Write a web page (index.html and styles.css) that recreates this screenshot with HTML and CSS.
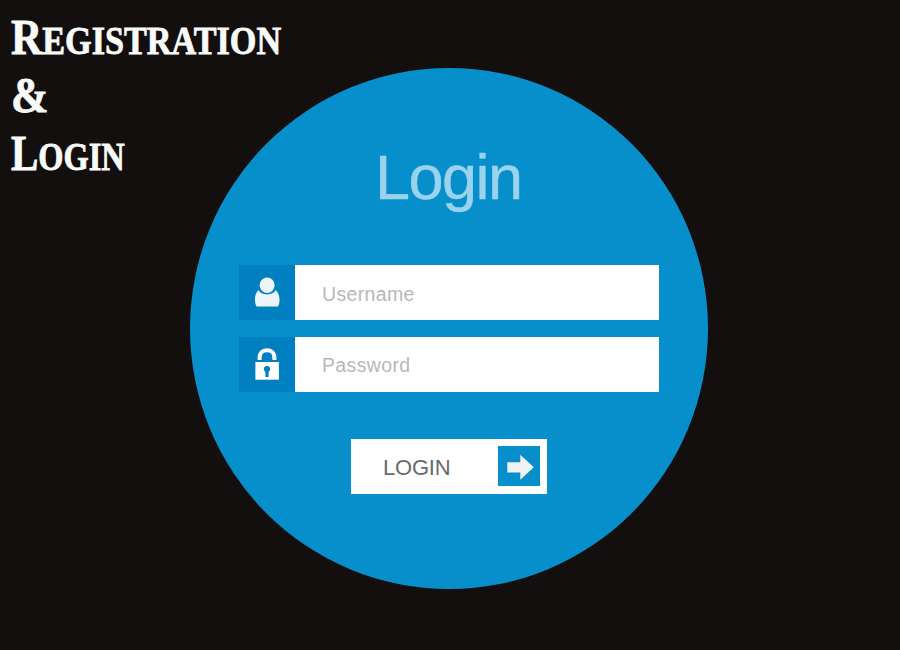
FILE: index.html
```html
<!DOCTYPE html>
<html lang="en">
<head>
<meta charset="utf-8">
<title>Registration &amp; Login</title>
<link rel="stylesheet" href="styles.css">
</head>
<body>
<main class="page">
  <h1 class="heading">
    <span class="line line-first">R<span class="small">EGISTRATION</span></span>
    <span class="line line-amp">&amp;</span>
    <span class="line line-last">L<span class="small">OGIN</span></span>
  </h1>
  <form class="circle">
    <h2 class="title">Login</h2>
    <div class="fields">
      <label class="field">
        <span class="tile">
          <svg width="56" height="55" viewBox="239 265 56 55">
            <path fill="#edf5fb" d="M258.6 290C261 295.8 273 295.8 275.6 290C279.4 293 281 301 278 306.6H256.6C253.6 301 254.8 293 258.6 290Z"/>
            <ellipse cx="267.1" cy="285.3" rx="8.7" ry="8.9" fill="#007fc1"/>
            <ellipse cx="267.1" cy="285.3" rx="7.5" ry="7.7" fill="#edf5fb"/>
          </svg>
        </span>
        <input class="input" type="text" placeholder="Username">
      </label>
      <label class="field">
        <span class="tile">
          <svg width="56" height="55" viewBox="239 337 56 55">
            <path fill="none" stroke="#fff" stroke-width="4" d="M259.6 360V357.6C259.6 347.8 274.4 347.8 274.4 357.6V360"/>
            <path fill="#fff" d="M255.4 362H278.9V379.7H255.4Z"/>
            <circle cx="267" cy="369" r="3.1" fill="#007fc1"/>
            <path fill="#007fc1" d="M265.4 370H268.6V377H265.4Z"/>
          </svg>
        </span>
        <input class="input input-password" type="password" placeholder="Password">
      </label>
    </div>
    <button class="button" type="button">
      <span class="label">LOGIN</span>
      <svg class="arrow" width="42" height="40" viewBox="0 0 42 40">
        <path fill="#f0f2f3" d="M9.3 16.2H22.3V8.7L35.8 21.3L22.3 33.7V26.5H9.3Z"/>
      </svg>
    </button>
  </form>
</main>
</body>
</html>
```
FILE: styles.css
```css
* {
  box-sizing: border-box;
}

body {
  margin: 0;
  background: #120f0e;
  font-family: "Liberation Sans", Arial, sans-serif;
}

.page {
  display: grid;
  height: 650px;
  overflow: hidden;
}

.heading,
.circle {
  grid-area: 1 / 1;
}

.heading {
  z-index: 1;
  justify-self: start;
  align-self: start;
  width: 340px;
  margin: 8px 0 0 11px;
  color: #f9fbf9;
  font: bold 50px/58px "Liberation Serif", "Times New Roman", serif;
  -webkit-text-stroke: 0.8px #f9fbf9;
}

.line {
  display: block;
  height: 58px;
  white-space: nowrap;
  transform-origin: left;
}

.line-first {
  transform: scaleX(0.866);
}

.line-amp {
  transform: scaleX(0.9);
}

.line-last {
  transform: scaleX(0.82);
}

.small {
  font-size: 39.5px;
  line-height: 1;
}

.circle {
  display: flex;
  flex-direction: column;
  width: 518px;
  height: 521px;
  margin: 68px 0 0 190px;
  padding: 77px 49px 0;
  border-radius: 50%;
  background: #078fcb;
}

.title {
  margin: 0 0 56px 136px;
  color: #9bd3ed;
  font-size: 63px;
  font-weight: normal;
  line-height: 64px;
  letter-spacing: -1.5px;
  -webkit-text-stroke: 0.4px #9bd3ed;
}

.fields {
  display: flex;
  flex-direction: column;
  gap: 17px;
}

.field {
  display: flex;
  height: 55px;
}

.tile {
  flex: 0 0 56px;
  background: #007fc1;
}

.tile svg {
  display: block;
}

.input {
  flex: 1;
  min-width: 0;
  padding: 4px 27px 0;
  border: 0;
  outline: 0;
  background: #fff;
  font: 19.5px "Liberation Sans", Arial, sans-serif;
  letter-spacing: 0.35px;
}

.input-password {
  padding-top: 2px;
}

.input::placeholder {
  color: #b7b8b9;
  opacity: 1;
}

.button {
  display: flex;
  align-items: center;
  justify-content: space-between;
  width: 196px;
  height: 55px;
  margin: 47px 0 0 112px;
  padding: 0 7px 1px 32px;
  border: 0;
  background: #fff;
  color: #686a6c;
  font: 22px "Liberation Sans", Arial, sans-serif;
  letter-spacing: -0.2px;
}

.label {
  padding-top: 3px;
}

.arrow {
  background: #078fcb;
}
```
